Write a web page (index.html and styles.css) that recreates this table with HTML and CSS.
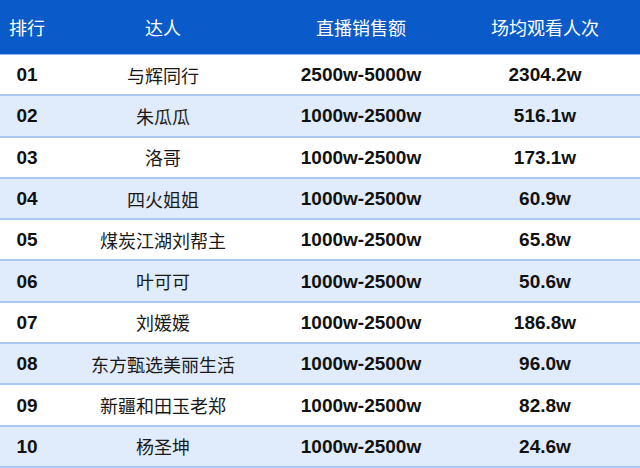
FILE: index.html
```html
<!DOCTYPE html>
<html lang="zh">
<head>
<meta charset="utf-8">
<link rel="stylesheet" href="styles.css">
</head>
<body>
<div class="table">
  <div class="row head">
    <div class="c">排行</div><div class="c">达人</div><div class="c">直播销售额</div><div class="c">场均观看人次</div>
  </div>
  <div class="row"><div class="c num">01</div><div class="c name">与辉同行</div><div class="c num">2500w-5000w</div><div class="c num">2304.2w</div></div>
  <div class="row alt"><div class="c num">02</div><div class="c name">朱瓜瓜</div><div class="c num">1000w-2500w</div><div class="c num">516.1w</div></div>
  <div class="row"><div class="c num">03</div><div class="c name">洛哥</div><div class="c num">1000w-2500w</div><div class="c num">173.1w</div></div>
  <div class="row alt"><div class="c num">04</div><div class="c name">四火姐姐</div><div class="c num">1000w-2500w</div><div class="c num">60.9w</div></div>
  <div class="row"><div class="c num">05</div><div class="c name">煤炭江湖刘帮主</div><div class="c num">1000w-2500w</div><div class="c num">65.8w</div></div>
  <div class="row alt"><div class="c num">06</div><div class="c name">叶可可</div><div class="c num">1000w-2500w</div><div class="c num">50.6w</div></div>
  <div class="row"><div class="c num">07</div><div class="c name">刘媛媛</div><div class="c num">1000w-2500w</div><div class="c num">186.8w</div></div>
  <div class="row alt"><div class="c num">08</div><div class="c name">东方甄选美丽生活</div><div class="c num">1000w-2500w</div><div class="c num">96.0w</div></div>
  <div class="row"><div class="c num">09</div><div class="c name">新疆和田玉老郑</div><div class="c num">1000w-2500w</div><div class="c num">82.8w</div></div>
  <div class="row alt"><div class="c num">10</div><div class="c name">杨圣坤</div><div class="c num">1000w-2500w</div><div class="c num">24.6w</div></div>
</div>
</body>
</html>
```

FILE: styles.css
```css
html, body {
  margin: 0;
  padding: 0;
  background: #ffffff;
}
.table {
  width: 640px;
  height: 468px;
  display: grid;
  grid-template-rows: 55px repeat(10, 1fr);
  font-family: "Noto Sans CJK SC", sans-serif;
}
.row {
  display: grid;
  grid-template-columns: 54px 218px 178px 190px;
  align-items: center;
  background: #ffffff;
  border-bottom: 2px solid #abc9f0;
  box-sizing: border-box;
}
.row.alt {
  background: #e0ebfb;
}
.row.head {
  background: #0a5bc9;
  color: #ffffff;
  font-size: 18px;
  border-bottom: 1px solid #8fb6ec;
}
.c {
  text-align: center;
  line-height: 1;
}
.name {
  font-size: 18px;
  color: #1a1a1a;
}
.num {
  font-family: "Liberation Sans", Arial, sans-serif;
  font-weight: bold;
  font-size: 19px;
  color: #111111;
}
```
